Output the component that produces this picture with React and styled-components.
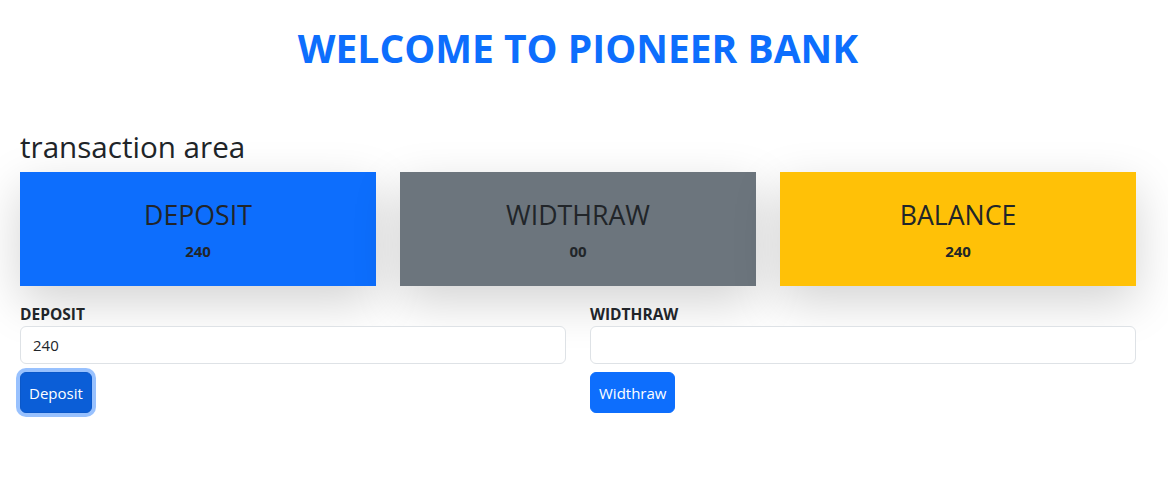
import React from "react";
import styled, { createGlobalStyle } from "styled-components";

const GlobalStyle = createGlobalStyle`
  body {
    margin: 0;
    background: #fff;
    color: #212529;
    font-family: "Open Sans", "Noto Sans", Arial, sans-serif;
  }
`;

const Page = styled.div`
  padding: 24px 32px 40px 20px;
`;

const Title = styled.h1`
  margin: 0 0 56px;
  text-align: center;
  color: #0d6efd;
  font-size: 39px;
  font-weight: 700;
  line-height: 48px;
`;

const SectionTitle = styled.h2`
  margin: 0 0 6px;
  font-size: 29.6px;
  font-weight: 400;
  line-height: 38px;
`;

const CardRow = styled.div`
  display: grid;
  grid-template-columns: repeat(3, 1fr);
  gap: 24px;
`;

const Card = styled.div`
  height: 114px;
  box-sizing: border-box;
  padding-top: 26px;
  text-align: center;
  background: ${(p) => p.$bg};
  box-shadow: 0 1rem 3rem rgba(0, 0, 0, 0.175);
`;

const CardTitle = styled.h3`
  margin: 0 0 8px;
  font-size: 26.7px;
  font-weight: 400;
  line-height: 33px;
`;

const Amount = styled.div`
  font-size: 15px;
  font-weight: 700;
  line-height: 24px;
`;

const FormRow = styled.div`
  display: grid;
  grid-template-columns: 1fr 1fr;
  gap: 24px;
  margin-top: 17px;
`;

const Field = styled.div`
  display: flex;
  flex-direction: column;
  align-items: flex-start;
`;

const Label = styled.label`
  font-size: 15.5px;
  font-weight: 700;
  line-height: 23px;
`;

const Input = styled.input`
  width: 100%;
  box-sizing: border-box;
  height: 38px;
  padding: 6px 12px;
  font-family: inherit;
  font-size: 15px;
  color: #212529;
  border: 1px solid #dee2e6;
  border-radius: 6px;
  outline: none;
`;

const Button = styled.button`
  margin-top: 8px;
  height: 41px;
  padding: 0 8px;
  font-family: inherit;
  font-size: 15px;
  color: #fff;
  border: 1px solid ${(p) => (p.$focused ? "#0a58ca" : "#0d6efd")};
  border-radius: 6px;
  background: ${(p) => (p.$focused ? "#0b5ed7" : "#0d6efd")};
  box-shadow: ${(p) => (p.$focused ? "0 0 0 4px rgba(49, 132, 253, 0.5)" : "none")};
  cursor: pointer;
`;

const cards = [
  { title: "DEPOSIT", amount: "240", bg: "#0d6efd" },
  { title: "WIDTHRAW", amount: "00", bg: "#6c757d" },
  { title: "BALANCE", amount: "240", bg: "#ffc107" },
];

export default function App() {
  return (
    <Page>
      <GlobalStyle />
      <Title>WELCOME TO PIONEER BANK</Title>
      <SectionTitle>transaction area</SectionTitle>
      <CardRow>
        {cards.map((c) => (
          <Card key={c.title} $bg={c.bg}>
            <CardTitle>{c.title}</CardTitle>
            <Amount>{c.amount}</Amount>
          </Card>
        ))}
      </CardRow>
      <FormRow>
        <Field>
          <Label>DEPOSIT</Label>
          <Input type="text" defaultValue="240" />
          <Button $focused>Deposit</Button>
        </Field>
        <Field>
          <Label>WIDTHRAW</Label>
          <Input type="text" />
          <Button>Widthraw</Button>
        </Field>
      </FormRow>
    </Page>
  );
}
